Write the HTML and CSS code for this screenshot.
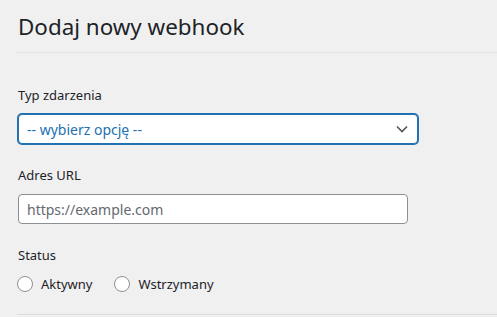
FILE: index.html
```html
<!DOCTYPE html>
<html lang="pl">
<head>
  <meta charset="UTF-8">
  <meta name="viewport" content="width=device-width, initial-scale=1.0">
  <title>Dodaj nowy webhook</title>
  <link rel="stylesheet" href="styles.css">
</head>
<body>
  <div class="wrap">
    <h1 class="page-title">Dodaj nowy webhook</h1>
    <form class="webhook-form">
      <div class="field">
        <label class="field-label" for="event-type">Typ zdarzenia</label>
        <div class="select-box">
          <select id="event-type">
            <option>-- wybierz opcję --</option>
          </select>
          <svg class="chevron" width="12" height="8" viewBox="0 0 12 8"><path d="M1 1.5l5 5 5-5" fill="none" stroke="#50575e" stroke-width="1.6"/></svg>
        </div>
      </div>
      <div class="field">
        <label class="field-label" for="url">Adres URL</label>
        <input type="text" id="url" class="text-input" placeholder="https://example.com">
      </div>
      <div class="field">
        <span class="field-label">Status</span>
        <div class="radio-row">
          <label class="radio"><span class="radio-dot"></span>Aktywny</label>
          <label class="radio"><span class="radio-dot"></span>Wstrzymany</label>
        </div>
      </div>
    </form>
  </div>
</body>
</html>
```

FILE: styles.css
```css
body {
  margin: 0;
  background: #f0f0f1;
  font-family: "Noto Sans", "Open Sans", sans-serif;
  color: #1d2327;
}
.wrap {
  padding-left: 17px;
}
.page-title {
  margin: 0;
  padding: 12px 0 10px 1px;
  font-size: 22.4px;
  font-weight: 400;
  line-height: 30px;
  border-bottom: 1px solid #e2e2e3;
}
.webhook-form {
  padding-top: 32px;
  border-bottom: 1px solid #dcdcde;
  padding-bottom: 20px;
}
.field {
  margin-bottom: 21px;
}
.field:last-child {
  margin-bottom: 0;
}
.field-label {
  display: block;
  font-size: 13px;
  line-height: 20px;
  margin: 0 0 9px 1px;
}
.select-box {
  position: relative;
  width: 400px;
  margin-left: 1px;
}
.select-box select {
  display: block;
  width: 100%;
  height: 30px;
  margin-top: 0;
  padding: 0 30px 0 8px;
  border: 1px solid #2271b1;
  border-radius: 4px;
  box-shadow: 0 0 0 1px #2271b1;
  background: #fff;
  color: #2271b1;
  font-family: inherit;
  font-size: 14px;
  font-weight: 400;
  appearance: none;
  outline: none;
}
.chevron {
  position: absolute;
  right: 10px;
  top: 11px;
}
.text-input {
  display: block;
  box-sizing: border-box;
  width: 390px;
  height: 30px;
  margin-left: 1px;
  padding: 0 8px;
  border: 1px solid #8c8f94;
  border-radius: 4px;
  background: #fff;
  font-family: inherit;
  font-size: 14px;
  color: #2c3338;
}
.text-input::placeholder {
  color: #646970;
}
.radio-row {
  display: flex;
  gap: 22px;
  height: 20px;
  align-items: center;
}
.radio {
  display: flex;
  align-items: center;
  gap: 8px;
  font-size: 13px;
}
.radio-dot {
  width: 14px;
  height: 14px;
  border: 1px solid #8c8f94;
  border-radius: 50%;
  background: #fff;
}
```
